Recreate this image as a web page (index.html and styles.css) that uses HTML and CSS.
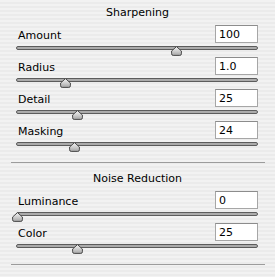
FILE: index.html
```html
<!DOCTYPE html>
<html lang="en">
<head>
  <meta charset="UTF-8">
  <title>Detail</title>
  <link rel="stylesheet" href="styles.css">
</head>
<body>
  <div class="panel">
    <section class="group">
      <h2 class="group-title">Sharpening</h2>

      <div class="row">
        <div class="row-head"><label>Amount</label><input class="value" type="text" value="100"></div>
        <div class="slider"><div class="track"></div><svg class="thumb" style="--pos:0.667" width="11" height="10" viewBox="0 0 11 10"><use href="#knob"/></svg></div>
      </div>

      <div class="row">
        <div class="row-head"><label>Radius</label><input class="value" type="text" value="1.0"></div>
        <div class="slider"><div class="track"></div><svg class="thumb" style="--pos:0.2" width="11" height="10" viewBox="0 0 11 10"><use href="#knob"/></svg></div>
      </div>

      <div class="row">
        <div class="row-head"><label>Detail</label><input class="value" type="text" value="25"></div>
        <div class="slider"><div class="track"></div><svg class="thumb" style="--pos:0.25" width="11" height="10" viewBox="0 0 11 10"><use href="#knob"/></svg></div>
      </div>

      <div class="row">
        <div class="row-head"><label>Masking</label><input class="value" type="text" value="24"></div>
        <div class="slider"><div class="track"></div><svg class="thumb" style="--pos:0.24" width="11" height="10" viewBox="0 0 11 10"><use href="#knob"/></svg></div>
      </div>
    </section>

    <hr class="divider">

    <section class="group group-next">
      <h2 class="group-title">Noise Reduction</h2>

      <div class="row">
        <div class="row-head"><label>Luminance</label><input class="value" type="text" value="0"></div>
        <div class="slider"><div class="track"></div><svg class="thumb" style="--pos:0" width="11" height="10" viewBox="0 0 11 10"><use href="#knob"/></svg></div>
      </div>

      <div class="row">
        <div class="row-head"><label>Color</label><input class="value" type="text" value="25"></div>
        <div class="slider"><div class="track"></div><svg class="thumb" style="--pos:0.25" width="11" height="10" viewBox="0 0 11 10"><use href="#knob"/></svg></div>
      </div>
    </section>

    <hr class="divider">
  </div>

  <!-- shared slider knob -->
  <svg class="defs" width="0" height="0">
    <defs>
      <linearGradient id="knobFill" x1="0" y1="0" x2="0" y2="1">
        <stop offset="0" stop-color="#f2f2f2"/>
        <stop offset="0.5" stop-color="#d0d0d0"/>
        <stop offset="1" stop-color="#a4a4a4"/>
      </linearGradient>
      <g id="knob">
        <path d="M5.5 0.6 L10.4 5 L10.4 7.8 Q10.4 9.4 8.8 9.4 L2.2 9.4 Q0.6 9.4 0.6 7.8 L0.6 5 Z" fill="url(#knobFill)" stroke="#4a4a4a" stroke-width="1"/>
      </g>
    </defs>
  </svg>
</body>
</html>
```

FILE: styles.css
```css
body {
  margin: 0;
  width: 275px;
  height: 277px;
  font-family: "DejaVu Sans", Verdana, sans-serif;
  font-size: 11px;
  color: #000;
  background: repeating-linear-gradient(#f2f2f2 0, #f2f2f2 2px, #ebebeb 2px, #ebebeb 4px);
  overflow: hidden;
}
.panel {
  display: flex;
  flex-direction: column;
}
.group-next {
  padding-top: 3px;
}
.group-title {
  margin: 0;
  height: 25px;
  line-height: 25px;
  font-size: 11px;
  font-weight: normal;
  text-align: center;
}
.row {
  margin: 0 17px 0 16px;
  height: 32px;
}
.row-head {
  display: flex;
  align-items: center;
  justify-content: space-between;
  height: 18px;
  padding-left: 2px;
}
.row-head label {
  padding-top: 2px;
}
.value {
  box-sizing: border-box;
  width: 43px;
  height: 18px;
  margin: 0;
  padding: 1px 0 0 3px;
  border: 1px solid #a6a6a6;
  border-top-color: #8c8c8c;
  background: #fff;
  font-family: "DejaVu Sans", Verdana, sans-serif;
  font-size: 11px;
  color: #000;
  outline: none;
}
.slider {
  position: relative;
  height: 14px;
}
.track {
  box-sizing: border-box;
  margin-top: 3px;
  height: 4px;
  border: 1px solid #5c5c5c;
  border-radius: 2px;
  background: #ababab;
}
.thumb {
  position: absolute;
  top: 0;
  left: calc(var(--pos) * (100% - 3px) - 4px);
}
.divider {
  margin: 9px 10px 0 11px;
  height: 0;
  border: 0;
  border-top: 1px solid #9c9c9c;
}
.defs {
  position: absolute;
}
```
